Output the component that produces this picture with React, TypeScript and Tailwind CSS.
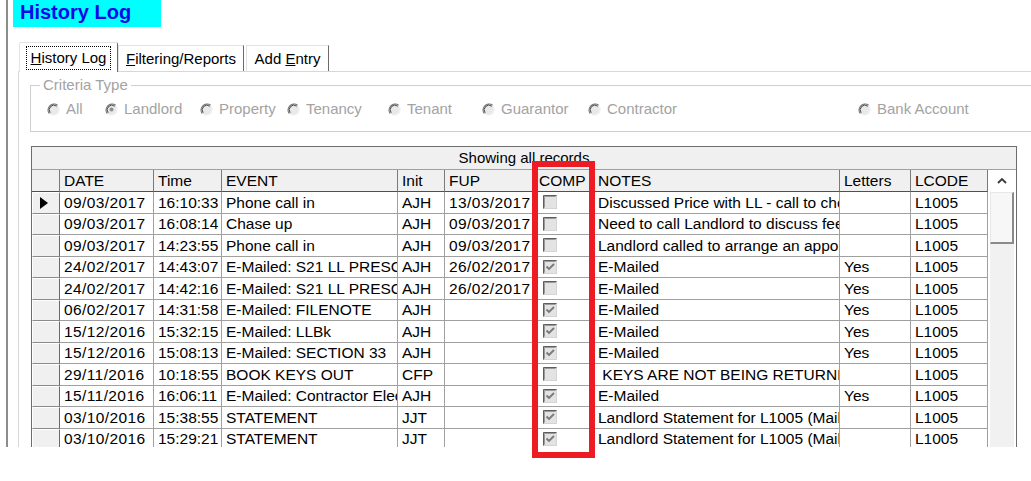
import React from 'react';

type Row = {
  date: string;
  time: string;
  event: string;
  init: string;
  fup: string;
  comp: boolean;
  notes: string;
  letters: string;
  lcode: string;
};

const rows: Row[] = [
  { date: '09/03/2017', time: '16:10:33', event: 'Phone call in', init: 'AJH', fup: '13/03/2017', comp: false, notes: 'Discussed Price with LL - call to check', letters: '', lcode: 'L1005' },
  { date: '09/03/2017', time: '16:08:14', event: 'Chase up', init: 'AJH', fup: '09/03/2017', comp: false, notes: 'Need to call Landlord to discuss fees', letters: '', lcode: 'L1005' },
  { date: '09/03/2017', time: '14:23:55', event: 'Phone call in', init: 'AJH', fup: '09/03/2017', comp: false, notes: 'Landlord called to arrange an appointment', letters: '', lcode: 'L1005' },
  { date: '24/02/2017', time: '14:43:07', event: 'E-Mailed: S21 LL PRESCRIBED', init: 'AJH', fup: '26/02/2017', comp: true, notes: 'E-Mailed', letters: 'Yes', lcode: 'L1005' },
  { date: '24/02/2017', time: '14:42:16', event: 'E-Mailed: S21 LL PRESCRIBED', init: 'AJH', fup: '26/02/2017', comp: false, notes: 'E-Mailed', letters: 'Yes', lcode: 'L1005' },
  { date: '06/02/2017', time: '14:31:58', event: 'E-Mailed: FILENOTE', init: 'AJH', fup: '', comp: true, notes: 'E-Mailed', letters: 'Yes', lcode: 'L1005' },
  { date: '15/12/2016', time: '15:32:15', event: 'E-Mailed: LLBk', init: 'AJH', fup: '', comp: true, notes: 'E-Mailed', letters: 'Yes', lcode: 'L1005' },
  { date: '15/12/2016', time: '15:08:13', event: 'E-Mailed: SECTION 33', init: 'AJH', fup: '', comp: true, notes: 'E-Mailed', letters: 'Yes', lcode: 'L1005' },
  { date: '29/11/2016', time: '10:18:55', event: 'BOOK KEYS OUT', init: 'CFP', fup: '', comp: false, notes: ' KEYS ARE NOT BEING RETURNED', letters: '', lcode: 'L1005' },
  { date: '15/11/2016', time: '16:06:11', event: 'E-Mailed: Contractor Electrical', init: 'AJH', fup: '', comp: true, notes: 'E-Mailed', letters: 'Yes', lcode: 'L1005' },
  { date: '03/10/2016', time: '15:38:55', event: 'STATEMENT', init: 'JJT', fup: '', comp: true, notes: 'Landlord Statement for L1005 (Mailed)', letters: '', lcode: 'L1005' },
  { date: '03/10/2016', time: '15:29:21', event: 'STATEMENT', init: 'JJT', fup: '', comp: true, notes: 'Landlord Statement for L1005 (Mailed)', letters: '', lcode: 'L1005' },
];

const criteria = [
  { label: 'All', w: 'w-[58px]' },
  { label: 'Landlord', w: 'w-[95px]', checked: true },
  { label: 'Property', w: 'w-[87px]' },
  { label: 'Tenancy', w: 'w-[101px]' },
  { label: 'Tenant', w: 'w-[94px]' },
  { label: 'Guarantor', w: 'w-[106px]' },
  { label: 'Contractor', w: 'w-[270px]' },
  { label: 'Bank Account', w: 'w-[130px]' },
];

const Radio = ({ checked }: { checked?: boolean }) => (
  <svg width="13" height="13" viewBox="0 0 13 13" className="shrink-0">
    <circle cx="6.5" cy="6.5" r="6" fill="#e9e9e9" />
    <path d="M10.7 2.3 A6 6 0 0 0 2.3 10.7" fill="none" stroke="#7a7a7a" strokeWidth="1.2" />
    <path d="M9.8 3.2 A4.7 4.7 0 0 0 3.2 9.8" fill="none" stroke="#454545" strokeWidth="1" />
    <path d="M2.3 10.7 A6 6 0 0 0 10.7 2.3" fill="none" stroke="#f4f4f4" strokeWidth="1" />
    {checked && <circle cx="6.5" cy="6.5" r="2" fill="#8f8f8f" />}
  </svg>
);

const CheckBox = ({ checked }: { checked: boolean }) => (
  <svg width="14" height="14" viewBox="0 0 14 14" className="shrink-0">
    <rect x="0" y="0" width="14" height="14" fill="#d4d4d4" />
    <path d="M0.5 13.5 V0.5 H13.5" fill="none" stroke="#5e5e5e" strokeWidth="1" />
    <path d="M1.5 12.5 V1.5 H12.5" fill="none" stroke="#9a9a9a" strokeWidth="1" />
    <rect x="2" y="2" width="11" height="11" fill="#e3e3e3" />
    {checked && <path d="M3.5 6.5 L6 9 L11 4" fill="none" stroke="#7a7a7a" strokeWidth="1.9" />}
  </svg>
);

const cols = 'grid grid-cols-[28px_94px_68px_176px_47px_90px_59px_246px_71px_77px]';
const headCell = 'h-[22px] bg-[#f0f0f0] border-r border-b border-r-[#7a7a7a] border-b-[#505050] pl-[4px] flex items-center overflow-hidden whitespace-nowrap';
const bodyCell = 'h-[21.5px] bg-white border-r border-b border-[#a0a0a0] pl-[4px] flex items-center overflow-hidden whitespace-pre';

const App: React.FC = () => {
  return (
    <div className="relative w-[1031px] h-[481px] bg-white overflow-hidden font-['Liberation_Sans',Arial,sans-serif] text-black">
      <div className="ml-[6px] h-[447px] border-l-2 border-[#8c8c8c] flex flex-col overflow-hidden">
        {/* title */}
        <div className="ml-[5px] w-[148px] h-[27px] shrink-0 bg-[#00ffff] pl-[7px] text-[20px] font-bold leading-[25px] text-[#0a0ae6]">
          History Log
        </div>

        {/* tabs */}
        <div className="ml-[11px] mt-[15px] h-[29px] shrink-0 flex items-end text-[15px] leading-[18px]">
          <div className="relative z-10 w-[99px] h-[30px] -mb-px bg-white border-t border-l border-r border-t-[#e3e3e3] border-l-[#e3e3e3] border-r-[#6a6a6a] rounded-t-[2px] flex items-center justify-center">
            <span className="px-[4px] py-[2px] outline-1 outline-dotted outline-black">
              <span className="underline">H</span>istory Log
            </span>
          </div>
          <div className="w-[126px] h-[26px] bg-white border-t border-l border-r border-t-[#e3e3e3] border-l-[#e3e3e3] border-r-[#6a6a6a] flex items-center justify-center">
            <span>
              <span className="underline">F</span>iltering/Reports
            </span>
          </div>
          <div className="ml-[2px] w-[83px] h-[26px] bg-white border-t border-l border-r border-t-[#e3e3e3] border-l-[#e3e3e3] border-r-[#6a6a6a] flex items-center justify-center">
            <span>
              Add <span className="underline">E</span>ntry
            </span>
          </div>
        </div>

        {/* panel */}
        <div className="ml-[10px] flex-1 border-t border-l border-[#d7d7d7] flex flex-col">
          {/* criteria group */}
          <div className="relative ml-[11px] mt-[13px] h-[47px] shrink-0 border border-r-0 border-[#cfcfcf]">
            <span className="absolute -top-[10px] left-[9px] bg-white px-[3px] text-[15px] leading-[18px] text-[#a3a3a3]">
              Criteria Type
            </span>
            <div className="h-full pl-[16px] pt-[2px] flex items-center text-[15px] text-[#a3a3a3]">
              {criteria.map((c) => (
                <div key={c.label} className={`${c.w} shrink-0 flex items-center gap-[6px]`}>
                  <Radio checked={c.checked} />
                  <span>{c.label}</span>
                </div>
              ))}
            </div>
          </div>

          {/* grid */}
          <div className="ml-[12px] mt-[14px] w-[986px] flex-1 border border-b-0 border-[#6d6d6d] flex flex-col overflow-hidden text-[15.5px]">
            <div className="h-[23px] shrink-0 bg-[#f0f0f0] border-b border-[#a0a0a0] flex items-center justify-center text-[15px]">
              Showing all records
            </div>
            <div className="flex flex-1 overflow-hidden">
              <div className={`${cols} content-start w-[956px] shrink-0`}>
                <div className={headCell} />
                <div className={headCell}>DATE</div>
                <div className={headCell}>Time</div>
                <div className={headCell}>EVENT</div>
                <div className={headCell}>Init</div>
                <div className={headCell}>FUP</div>
                <div className={headCell}>COMP</div>
                <div className={headCell}>NOTES</div>
                <div className={headCell}>Letters</div>
                <div className={headCell}>LCODE</div>

                {rows.map((r, i) => (
                  <React.Fragment key={i}>
                    <div className="h-[21.5px] bg-[#f0f0f0] border-t border-l border-t-white border-l-white border-r border-b border-r-[#6a6a6a] border-b-[#8a8a8a] flex items-center pl-[7px]">
                      {i === 0 && (
                        <svg width="8" height="12" viewBox="0 0 8 12">
                          <polygon points="0,0 8,6 0,12" fill="#000" />
                        </svg>
                      )}
                    </div>
                    <div className={`${bodyCell} tracking-[0.4px]`}>{r.date}</div>
                    <div className={bodyCell}>{r.time}</div>
                    <div className={bodyCell}>{r.event}</div>
                    <div className={bodyCell}>{r.init}</div>
                    <div className={`${bodyCell} tracking-[0.4px]`}>{r.fup}</div>
                    <div className={`${bodyCell} pl-[8px]`}>
                      <CheckBox checked={r.comp} />
                    </div>
                    <div className={bodyCell}>{r.notes}</div>
                    <div className={bodyCell}>{r.letters}</div>
                    <div className={bodyCell}>{r.lcode}</div>
                  </React.Fragment>
                ))}
              </div>

              {/* scrollbar */}
              <div className="ml-[2px] w-[24px] shrink-0 flex flex-col">
                <div className="h-[22px] shrink-0 bg-white flex items-center justify-center">
                  <svg width="10" height="6" viewBox="0 0 10 6">
                    <path d="M1 5 L5 1 L9 5" fill="none" stroke="#3a3a3a" strokeWidth="1.8" />
                  </svg>
                </div>
                <div className="h-[52px] shrink-0 bg-[#f7f7f7] border-t border-l border-t-[#e8e8e8] border-l-[#e8e8e8] border-r-2 border-b-2 border-r-[#8a8a8a] border-b-[#8a8a8a]" />
                <div className="flex-1 bg-[#f1f1f1]" />
              </div>
            </div>
          </div>
        </div>
      </div>

      {/* red highlight around COMP column */}
      <div className="absolute left-[532px] top-[161px] w-[63px] h-[297px] border-[6px] border-[#ed1c24]" />
    </div>
  );
};

export default App;
